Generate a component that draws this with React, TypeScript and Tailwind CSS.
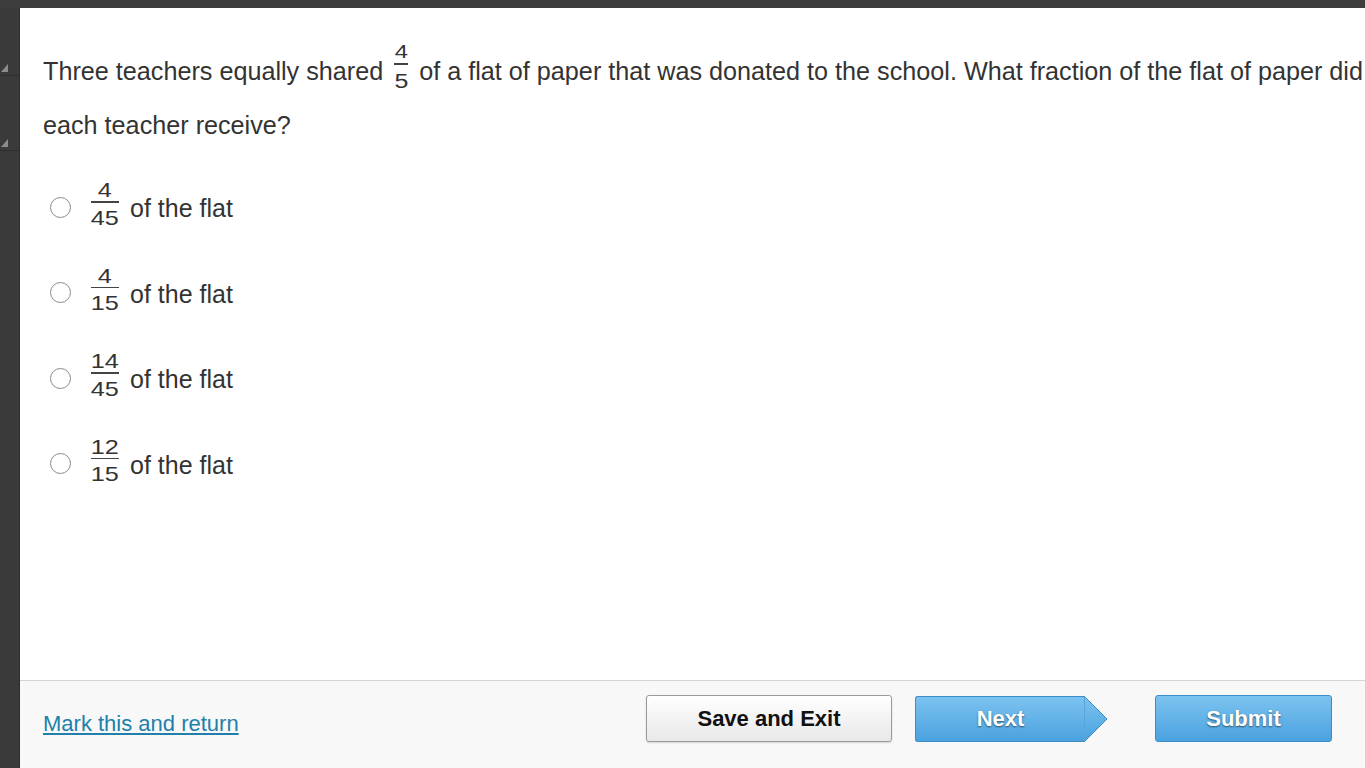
import React from 'react';

const sans = { fontFamily: '"Liberation Sans", Arial, sans-serif' };

function InlineFraction({ top, bottom }: { top: string; bottom: string }) {
  return (
    <span className="inline-flex w-[22px] flex-col items-center align-[22px] text-[#333]">
      <span className="inline-block scale-x-125 text-[19px] leading-[16px]">{top}</span>
      <span className="mt-[3px] h-[1.5px] w-[14px] bg-[#444]" />
      <span className="mt-[8px] inline-block scale-x-125 text-[20px] leading-[16px]">{bottom}</span>
    </span>
  );
}

function OptionFraction({ top, bottom }: { top: string; bottom: string }) {
  return (
    <div className="flex w-[29px] flex-col items-center text-[#333]">
      <span className="inline-block scale-x-[1.2] text-[21px] leading-[20px]">{top}</span>
      <span className="mt-[1px] h-[1.5px] w-[28px] bg-[#444]" />
      <span className="mt-[5px] inline-block scale-x-[1.2] text-[21px] leading-[20px]">{bottom}</span>
    </div>
  );
}

function Option({ top, bottom }: { top: string; bottom: string }) {
  return (
    <label className="flex items-center">
      <span className="mt-[7px] h-[21px] w-[21px] rounded-full border-[1.5px] border-[#8a8a8a] bg-white" />
      <span className="ml-[19px]">
        <OptionFraction top={top} bottom={bottom} />
      </span>
      <span className="ml-[11px] mt-[10px] text-[25px] leading-[25px] text-[#333]">of the flat</span>
    </label>
  );
}

function Grip() {
  return (
    <svg width="7" height="8" viewBox="0 0 7 8" className="mb-[3px] ml-[1px]">
      <polygon points="7,0 7,8 0,8" fill="#8c8c8c" />
    </svg>
  );
}

const options = [
  { top: '4', bottom: '45' },
  { top: '4', bottom: '15' },
  { top: '14', bottom: '45' },
  { top: '12', bottom: '15' },
];

export default function App() {
  return (
    <div className="flex h-[768px] w-[1365px] flex-col overflow-hidden bg-[#3c3c3c]" style={sans}>
      <div className="h-[8px] bg-[#3d3d3d]" />
      <div className="flex min-h-0 flex-1">
        {/* left tool strip */}
        <div className="flex w-[20px] flex-col border-r border-[#2e2e2e] bg-[#3a3a3a]">
          <div className="flex h-[68px] items-end border-b border-[#2c2c2c]">
            <Grip />
          </div>
          <div className="flex h-[75px] items-end border-b border-[#2c2c2c]">
            <Grip />
          </div>
        </div>

        <main className="flex min-w-0 flex-1 flex-col overflow-hidden bg-white">
          <div className="flex-1 pl-[23px] pt-[36px]">
            <p className="w-[1335px] text-[25.2px] leading-[54px] text-[#333]">
              Three teachers equally shared <InlineFraction top="4" bottom="5" /> of a flat of paper that was
              donated to the school. What fraction of the flat of paper did each teacher receive?
            </p>

            <div className="mt-[28px] flex flex-col gap-[38px] pl-[7px]">
              {options.map((o) => (
                <Option key={o.top + '/' + o.bottom} top={o.top} bottom={o.bottom} />
              ))}
            </div>
          </div>

          <footer className="flex h-[88px] items-start border-t border-[#d4d4d4] bg-[#f8f8f8] pl-[23px] pr-[33px] pt-[14px]">
            <a href="#" className="mt-[18px] text-[22px] leading-[22px] text-[#2180ab] underline underline-offset-[2px]">
              Mark this and return
            </a>

            <div className="ml-auto flex items-center">
              <button className="flex h-[47px] w-[246px] items-center justify-center rounded-[3px] border border-[#9a9a9a] bg-linear-to-b from-white to-[#e8e8e8] text-[22px] font-bold text-[#111] shadow-[0_1px_2px_rgba(0,0,0,0.15)]">
                Save and Exit
              </button>

              <div className="ml-[23px] flex items-center">
                <button className="flex h-[46px] w-[170px] items-center justify-center rounded-l-[3px] border border-r-0 border-[#3b8dc9] bg-linear-to-b from-[#7cc3f0] to-[#4aa2df] text-[22px] font-bold text-white [text-shadow:0_1px_2px_rgba(0,0,0,0.55)]">
                  Next
                </button>
                <svg width="24" height="46" viewBox="0 0 24 46" className="-ml-px">
                  <defs>
                    <linearGradient id="nextArrow" x1="0" y1="0" x2="0" y2="1">
                      <stop offset="0" stopColor="#7cc3f0" />
                      <stop offset="1" stopColor="#4aa2df" />
                    </linearGradient>
                  </defs>
                  <polygon points="0.5,0.5 23,23 0.5,45.5" fill="url(#nextArrow)" stroke="#3b8dc9" strokeWidth="1" />
                  <line x1="0.5" y1="1" x2="0.5" y2="45" stroke="#5aa6dc" strokeWidth="1" />
                </svg>
              </div>

              <button className="ml-[47px] flex h-[47px] w-[177px] items-center justify-center rounded-[3px] border border-[#3b8dc9] bg-linear-to-b from-[#7cc3f0] to-[#4aa2df] text-[22px] font-bold text-white [text-shadow:0_1px_2px_rgba(0,0,0,0.55)]">
                Submit
              </button>
            </div>
          </footer>
        </main>
      </div>
    </div>
  );
}
